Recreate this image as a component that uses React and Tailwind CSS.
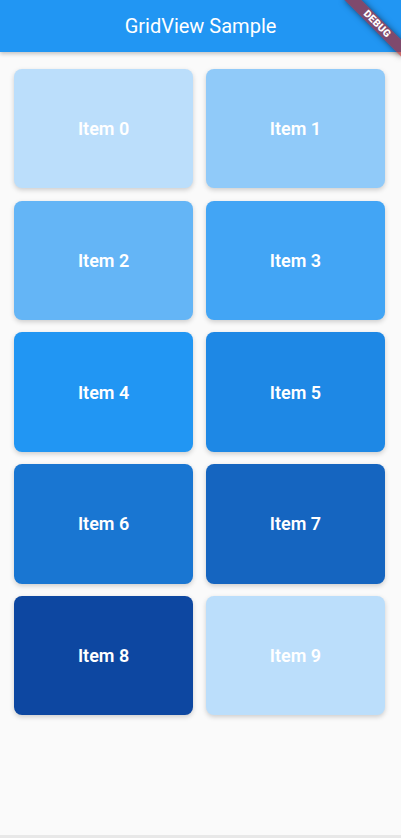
import React from 'react';

// Material blue shades, item 9 wraps back to the first one
const shades = [
  'bg-[#BBDEFB]',
  'bg-[#90CAF9]',
  'bg-[#64B5F6]',
  'bg-[#42A5F5]',
  'bg-[#2196F3]',
  'bg-[#1E88E5]',
  'bg-[#1976D2]',
  'bg-[#1565C0]',
  'bg-[#0D47A1]',
  'bg-[#BBDEFB]',
];

const DebugBanner = () => (
  <div className="pointer-events-none absolute left-[337px] top-[18px] z-20 flex h-[12px] w-[80px] rotate-45 items-center justify-center bg-[#B71C1CA0] shadow-[0_0_6px_rgba(0,0,0,0.5)]">
    <span className="text-[10.2px] font-black leading-none tracking-[0.2px] text-white">DEBUG</span>
  </div>
);

export default function App() {
  return (
    <div className="relative flex h-[838px] w-full flex-col overflow-hidden bg-[#FAFAFA] font-['Roboto',sans-serif]">
      {/* App bar */}
      <header className="relative z-10 flex h-[52px] shrink-0 items-center justify-center bg-[#2196F3] shadow-[0_2px_4px_rgba(0,0,0,0.22)]">
        <h1 className="text-[20px] font-normal text-white">GridView Sample</h1>
      </header>

      {/* Grid */}
      <main className="grid grid-cols-2 gap-x-[12.7px] gap-y-[12.45px] pl-[14px] pr-[16px] pt-[17px]">
        {shades.map((bg, i) => (
          <div
            key={i}
            className={`flex h-[119.3px] items-center justify-center rounded-[8px] shadow-[0_2px_5px_rgba(0,0,0,0.18)] ${bg}`}
          >
            <span className="text-[18px] font-semibold text-white">Item {i}</span>
          </div>
        ))}
      </main>

      <div className="flex-1" />
      <div className="h-[3px] shrink-0 bg-[#E8E8E8]" />

      <DebugBanner />
    </div>
  );
}
